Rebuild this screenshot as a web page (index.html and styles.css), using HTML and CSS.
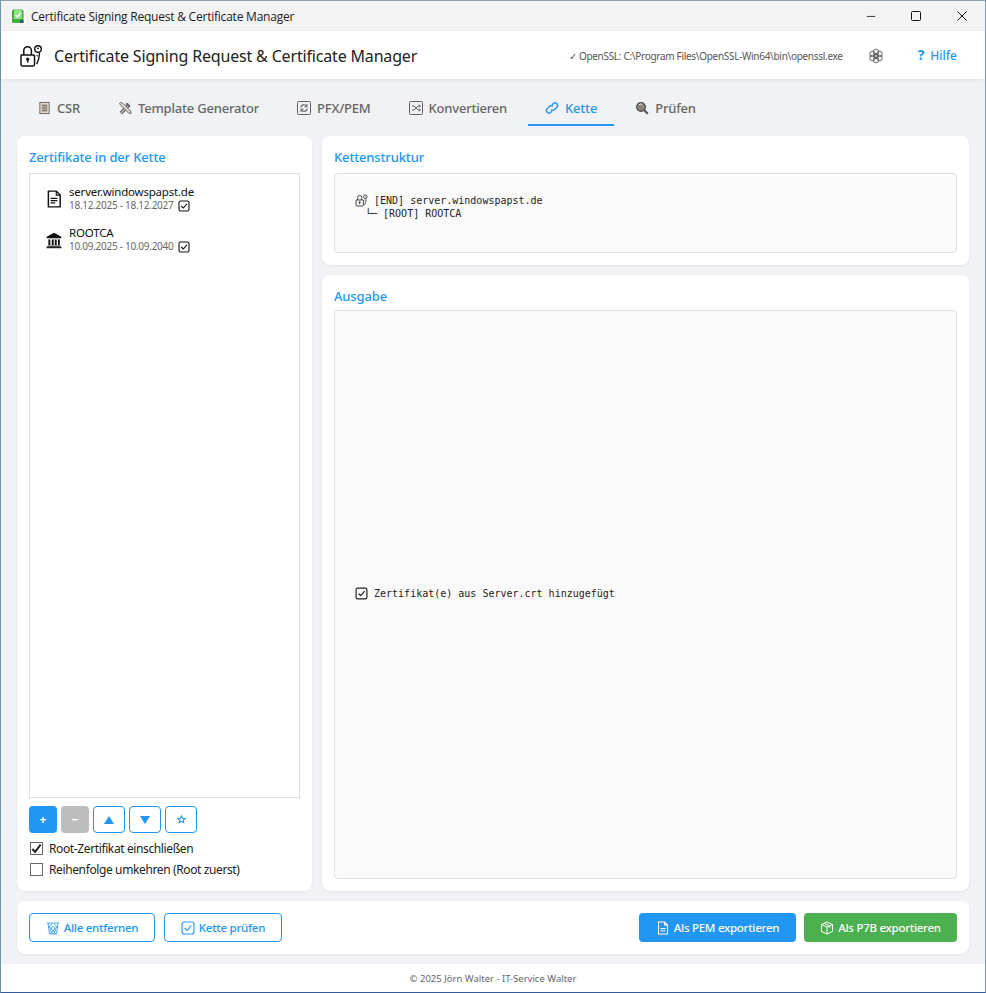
FILE: index.html
```html
<!DOCTYPE html>
<html lang="de">
<head>
<meta charset="utf-8">
<title>Certificate Signing Request &amp; Certificate Manager</title>
<link rel="stylesheet" href="styles.css">
</head>
<body>
<svg class="defs" width="0" height="0" aria-hidden="true">
  <defs>
    <symbol id="check" viewBox="0 0 12 12"><rect x="1" y="1" width="10" height="10" rx="1.5" fill="none" stroke="currentColor" stroke-width="1.1"/><path d="M3.3 6l2 2 3.600-4.200" fill="none" stroke="currentColor" stroke-width="1.1"/></symbol>
    <symbol id="lockkey" viewBox="0 0 24 24"><path d="M2.500 11h12a1 1 0 0 1 1 1v8.500a1.600 1.600 0 0 1-1.600 1.600H3.600A1.600 1.600 0 0 1 2 20.500V11.500a.5.500 0 0 1 .5-.5zM4.800 11V6.500a3.800 3.800 0 0 1 7.600 0V11" fill="none" stroke="currentColor" stroke-width="1.500"/><circle cx="8.700" cy="15.200" r="1.600" fill="currentColor"/><path d="M8 15h1.400v3.500H8z" fill="currentColor"/><circle cx="19" cy="5" r="3.300" fill="none" stroke="currentColor" stroke-width="1.400"/><path d="M20.300 8.200c.2 4-.4 8-2.800 12M19 12l-1.500-.5" fill="none" stroke="currentColor" stroke-width="1.300"/><circle cx="19" cy="4.300" r=".9" fill="currentColor"/></symbol>
  </defs>
</svg>
<div class="window">
  <div class="titlebar">
    <svg class="app-icon" viewBox="0 0 16 16"><rect width="16" height="16" fill="#f7f7f7"/><rect x="2" y="1.500" width="11.500" height="13.500" rx="1.500" fill="#3fae3f"/><rect x="4" y="2" width="8" height="9" fill="#8fe08a"/><path d="M5.500 7l2 2 3-4" fill="none" stroke="#fff" stroke-width="1.400"/><rect x="10" y="12" width="3.500" height="3" fill="#2c5a78"/></svg>
    <span class="title-text">Certificate Signing Request &amp; Certificate Manager</span>
    <div class="win-controls">
      <svg viewBox="0 0 12 12"><path d="M1 6.500h10" stroke="#111" fill="none"/></svg>
      <svg viewBox="0 0 12 12"><rect x="1.500" y="1.500" width="9" height="9" rx="1" stroke="#111" fill="none"/></svg>
      <svg viewBox="0 0 12 12"><path d="M1.500 1.500l9 9M10.500 1.500l-9 9" stroke="#111" fill="none"/></svg>
    </div>
  </div>
  <header class="app-header">
    <svg class="logo"><use href="#lockkey"/></svg>
    <h1>Certificate Signing Request &amp; Certificate Manager</h1>
    <span class="openssl">✓ OpenSSL: C:\Program Files\OpenSSL-Win64\bin\openssl.exe</span>
    <svg class="gear" viewBox="0 0 16 16" fill="none" stroke="#444" stroke-width=".8"><circle cx="8" cy="8" r="2.400"/><circle cx="8" cy="4" r="2.800"/><circle cx="8" cy="12" r="2.800"/><circle cx="4.500" cy="6" r="2.800"/><circle cx="11.500" cy="6" r="2.800"/><circle cx="4.500" cy="10" r="2.800"/><circle cx="11.500" cy="10" r="2.800"/></svg>
    <a class="help"><span class="q">?</span> Hilfe</a>
  </header>
  <nav class="tabs">
    <div class="tab">
      <svg class="narrow" viewBox="0 0 14 14"><rect x="2" y="1" width="10" height="12" fill="#e8d9c6" stroke="#6b625a"/><path d="M4 4h6M4 6h6M4 8h6M4 10h6" stroke="#4f4f4f"/></svg>CSR</div>
    <div class="tab">
      <svg viewBox="0 0 14 14" fill="none"><path d="M2 11.500L10.500 3M3.500 13L12 4.500" stroke="#66625e" stroke-width="1.300"/><path d="M1.500 2.500l1-1 2 .5 8 8 .5 2.500-2.500-.5-8-8z" stroke="#62666e" stroke-width="1" fill="#e3d6c5"/><path d="M9 1.500l3.500 3.500-1.500 1.500L7.500 3z" fill="#62666e"/></svg>Template Generator</div>
    <div class="tab">
      <svg viewBox="0 0 14 14" fill="none"><rect x=".5" y=".5" width="13" height="13" rx="1" stroke="#5f5f5f"/><path d="M3.800 6.500a3.200 3.200 0 0 1 5.700-1.500M10.200 7.500a3.200 3.200 0 0 1-5.700 1.500" stroke="#5f5f5f" stroke-width="1.200"/><path d="M10 3v2.800H7.500M4 11V8.200h2.500" stroke="#5f5f5f"/></svg>PFX/PEM</div>
    <div class="tab">
      <svg viewBox="0 0 14 14" fill="none"><rect x=".5" y=".5" width="13" height="13" rx="1" stroke="#5f5f5f"/><path d="M3 5h2l4 4h2M3 9h2l4-4h2M10 3.500L11.500 5 10 6.500M10 7.500L11.500 9 10 10.500" stroke="#5f5f5f"/></svg>Konvertieren</div>
    <div class="tab active">
      <svg viewBox="0 0 14 14" fill="none" stroke="#2196f3" stroke-width="1.500"><path d="M6 8.500a2.500 2.500 0 0 0 3.600 0l2.200-2.200a2.500 2.500 0 0 0-3.600-3.600L7 3.900"/><path d="M8 5.500a2.500 2.500 0 0 0-3.600 0L2.200 7.700a2.500 2.500 0 0 0 3.600 3.600L7 10.100"/></svg>Kette</div>
    <div class="tab">
      <svg viewBox="0 0 14 14" fill="none"><circle cx="6" cy="6" r="4.300" fill="#8f8378" stroke="#4f4f55" stroke-width="1.400"/><path d="M4 3.800a3 3 0 0 1 3-.6" stroke="#eee"/><path d="M9.200 9.200l3.600 3.600" stroke="#4f4f55" stroke-width="2"/></svg>Prüfen</div>
  </nav>
  <main class="content">
    <div class="columns">
      <section class="card left">
        <h2>Zertifikate in der Kette</h2>
        <div class="listbox">
          <div class="item">
            <svg class="item-icon" viewBox="0 0 14 16" fill="none" stroke="#111"><path d="M2 1h7l3.500 3.500V15H2z" stroke-width="1.300"/><path d="M9 1v3.500h3.500" /><path d="M4 7.500h6M4 9.500h6M4 11.500h4" stroke-width="1.100"/></svg>
            <div class="item-text">
              <div class="item-name">server.windowspapst.de</div>
              <div class="item-date">18.12.2025 - 18.12.2027 <svg class="chk"><use href="#check"/></svg></div>
            </div>
          </div>
          <div class="item">
            <svg class="item-icon" viewBox="0 0 14 16" fill="#111"><path d="M7 1.500L.5 5v1.500h13V5z"/><rect x="2" y="7.500" width="1.700" height="5"/><rect x="5" y="7.500" width="1.700" height="5"/><rect x="7.700" y="7.500" width="1.700" height="5"/><rect x="10.500" y="7.500" width="1.700" height="5"/><rect x="1" y="13" width="12" height="1"/><rect x=".3" y="14.300" width="13.400" height="1"/></svg>
            <div class="item-text">
              <div class="item-name">ROOTCA</div>
              <div class="item-date">10.09.2025 - 10.09.2040 <svg class="chk"><use href="#check"/></svg></div>
            </div>
          </div>
        </div>
        <div class="list-buttons">
          <button class="sq primary">+</button>
          <button class="sq grey">−</button>
          <button class="sq outline wide"><svg viewBox="0 0 10 8"><path d="M5 0l5 8H0z" fill="#2196f3"/></svg></button>
          <button class="sq outline wide"><svg viewBox="0 0 10 8"><path d="M5 8L0 0h10z" fill="#2196f3"/></svg></button>
          <button class="sq outline wide"><svg class="star" viewBox="0 0 10 10"><path d="M5 1l1.100 2.700 2.900.2-2.200 1.900.7 2.800L5 7.100 2.500 8.600l.7-2.800L1 3.900l2.900-.2z" fill="none" stroke="#2196f3" stroke-width="1.200"/></svg></button>
        </div>
        <label class="check"><span class="box on"><svg viewBox="0 0 14 14"><path d="M2.500 7.500l3 3.200 6-8" fill="none" stroke="#222" stroke-width="2.200"/></svg></span>Root-Zertifikat einschließen</label>
        <label class="check"><span class="box"></span>Reihenfolge umkehren (Root zuerst)</label>
      </section>
      <div class="right">
        <section class="card chain">
          <h2>Kettenstruktur</h2>
          <div class="mono-box chain-box">
            <div class="mono-line"><svg class="mono-icon"><use href="#lockkey"/></svg> [END] server.windowspapst.de</div>
            <div class="mono-line indent">└─ [ROOT] ROOTCA</div>
          </div>
        </section>
        <section class="card output">
          <h2>Ausgabe</h2>
          <div class="mono-box output-box">
            <div class="mono-line"><svg class="mono-icon"><use href="#check"/></svg> Zertifikat(e) aus Server.crt hinzugefügt</div>
          </div>
        </section>
      </div>
    </div>
    <section class="card actions">
      <button class="btn outline-btn w-remove">
        <svg viewBox="0 0 14 14" fill="none" stroke="#2196f3"><path d="M1 2h12M2 2l1.500 11h7L12 2M2.500 5l7.500 8M11.500 5L4 13M6 2.500L2.500 7M8 2.500L11.500 7M4 9l3-4 3 4-3 4z" stroke-width=".8"/></svg>
        Alle entfernen</button>
      <button class="btn outline-btn w-check">
        <svg viewBox="0 0 14 14" fill="none" stroke="#2196f3" stroke-width="1.100"><rect x="1" y="1" width="12" height="12" rx="2"/><path d="M3.800 7l2.300 2.400L10.400 4.500"/></svg>
        Kette prüfen</button>
      <div class="spacer"></div>
      <button class="btn blue w-pem">
        <svg viewBox="0 0 14 14" fill="none" stroke="#fff" stroke-width="1.100"><path d="M2.500 1h6l3 3v9h-9zM8.500 1v3h3M4.500 7.500h5M4.500 9.800h5"/></svg>
        Als PEM exportieren</button>
      <button class="btn green w-p7b">
        <svg viewBox="0 0 14 14" fill="none" stroke="#fff" stroke-width="1"><path d="M7 1l5.500 2.500v7L7 13l-5.500-2.500v-7zM1.500 3.500L7 6l5.500-2.500M7 6v7M4.200 2.300l5.500 2.500v2"/></svg>
        Als P7B exportieren</button>
    </section>
  </main>
  <footer class="footer">© 2025 Jörn Walter - IT-Service Walter</footer>
</div>
</body>
</html>
```

FILE: styles.css
```css
* { box-sizing: border-box; }
html, body { margin: 0; height: 100%; }
body { font-family: "Noto Sans", "Open Sans", sans-serif; color: #111; }
.defs { position: absolute; }
.window {
  height: 993px; display: flex; flex-direction: column;
  border: 1px solid #6f93ab; border-top-color: #86a3b6; border-bottom-color: #345b96; border-right-color: #7d9aae;
  background: #f0f2f6;
}
.titlebar { height: 30px; flex: none; background: #f3f3f3; display: flex; align-items: center; padding-left: 9px; }
.app-icon { width: 16px; height: 16px; flex: none; }
.title-text { margin-left: 5px; font-family: "Open Sans", sans-serif; font-size: 12px; letter-spacing: -.22px; color: #1a1a1a; }
.win-controls { margin-left: auto; display: flex; }
.win-controls svg { width: 12px; height: 12px; margin-left: 34px; }
.win-controls svg:last-child { margin-right: 17px; }
.win-controls svg:first-child { width: 10px; }
.app-header {
  height: 48px; flex: none; background: #fff; display: flex; align-items: center;
  padding: 1px 0 0 18px; box-shadow: 0 1px 4px rgba(0,0,0,.08); position: relative;
}
.logo { width: 24px; height: 24px; color: #111; flex: none; }
h1 { margin: 0 0 0 11px; font-size: 16px; font-weight: 400; color: #222; letter-spacing: -.17px; }
.openssl { margin-left: auto; font-size: 10px; letter-spacing: -.3px; color: #555; }
.gear { width: 16px; height: 16px; margin-left: 25px; }
.help { margin-left: 34px; margin-right: 28px; font-size: 12px; font-weight: 500; color: #2196f3; display: flex; gap: 6px; }
.help .q { font-weight: 700; font-size: 14px; line-height: 16px; }
.tabs { flex: none; display: flex; gap: 4px; padding: 11px 0 0 20px; height: 47px; }
.tab {
  display: flex; align-items: center; gap: 6px; height: 36px; padding: 1px 17px 0;
  font-size: 13px; font-weight: 500; letter-spacing: -.2px; color: #666; border-bottom: 2px solid transparent;
}
.tab svg { width: 14px; height: 14px; flex: none; }
.tab svg.narrow { width: 13px; }
.tab.active { color: #2196f3; border-bottom-color: #2196f3; }
.content { flex: 1; min-height: 0; display: flex; flex-direction: column; gap: 10px; padding: 10px 16px 10px; }
.columns { flex: 1; min-height: 0; display: flex; gap: 10px; }
.card { background: #fff; border-radius: 8px; box-shadow: 0 1px 3px rgba(0,0,0,.06); }
h2 { margin: 0; font-size: 13px; font-weight: 500; letter-spacing: -.15px; color: #2196f3; line-height: 18px; }
.left { width: 295px; flex: none; padding: 12px 12px 0; display: flex; flex-direction: column; }
.listbox { flex: 1; min-height: 0; margin-top: 7px; border: 1px solid #ddd; padding: 6px 0 0 16px; }
.item { display: flex; align-items: center; gap: 7px; height: 41px; padding-bottom: 5px; }
.item-icon { width: 16px; height: 18px; flex: none; margin-top: 2px; }
.item-name { font-size: 11.5px; line-height: 15px; letter-spacing: -.2px; color: #111; }
.item-date { font-size: 10px; line-height: 13px; letter-spacing: -.27px; color: #666; display: flex; align-items: center; gap: 5px; }
.chk { width: 12px; height: 12px; color: #111; flex: none; }
.list-buttons { display: flex; gap: 4px; margin-top: 8px; height: 27px; }
button { font-family: inherit; cursor: pointer; }
.sq { width: 28px; height: 27px; padding: 0; border-radius: 4px; border: 1px solid transparent; font-size: 12px; font-weight: 700; display: flex; align-items: center; justify-content: center; }
.primary { background: #2196f3; color: #fff; }
.grey { background: #bdbdbd; color: #fff; }
.outline { background: #fff; border-color: #2196f3; color: #2196f3; }
.wide { width: 32px; }
.wide svg { width: 10px; height: 8px; }
.wide svg.star { width: 9px; height: 9px; }
.check { display: flex; align-items: center; gap: 6px; font-size: 12px; letter-spacing: -.38px; color: #222; height: 21px; padding-left: 1px; }
.list-buttons + .check { margin-top: 5px; }
.check:last-child { margin-bottom: 11px; }
.box { width: 13px; height: 13px; border: 1px solid #666; background: #fff; flex: none; display: flex; }
.box svg { width: 13px; height: 13px; margin: -1px 0 0 -1px; flex: none; }
.right { flex: 1; min-width: 0; display: flex; flex-direction: column; gap: 10px; }
.chain { height: 129px; flex: none; padding: 12px; display: flex; flex-direction: column; }
.output { flex: 1; min-height: 0; padding: 12px; display: flex; flex-direction: column; }
.mono-box { background: #fafafa; border: 1px solid #e0e0e0; border-radius: 4px; flex: 1; min-height: 0; }
.chain-box { margin-top: 7px; padding: 20px 20px 0; }
.output-box { margin-top: 5px; padding: 0 20px 2px; display: flex; align-items: center; }
.mono-line { font-family: "DejaVu Sans Mono", monospace; font-size: 10px; line-height: 13px; color: #222; white-space: pre; display: flex; align-items: center; }
.indent { padding-left: 10px; }
.mono-icon { width: 13px; height: 13px; color: #222; }
.actions { flex: none; height: 53px; display: flex; align-items: center; gap: 9px; padding: 0 12px; }
.btn { height: 29px; border-radius: 4px; border: 1px solid transparent; display: flex; align-items: center; justify-content: center; gap: 4px; font-size: 11.5px; font-weight: 500; letter-spacing: -.26px; padding: 0; }
.btn svg { width: 14px; height: 14px; flex: none; }
.spacer { flex: 1; }
.outline-btn { background: #fff; border-color: #2196f3; color: #2196f3; }
.blue { background: #2196f3; color: #fff; }
.green { background: #4caf50; color: #fff; }
.w-remove { width: 126px; }
.w-check { width: 118px; }
.w-pem { width: 157px; }
.w-p7b { width: 153px; margin-left: -1px; }
.footer { height: 28px; flex: none; background: #fff; display: flex; align-items: center; justify-content: center; font-size: 9.5px; color: #666; }
```
